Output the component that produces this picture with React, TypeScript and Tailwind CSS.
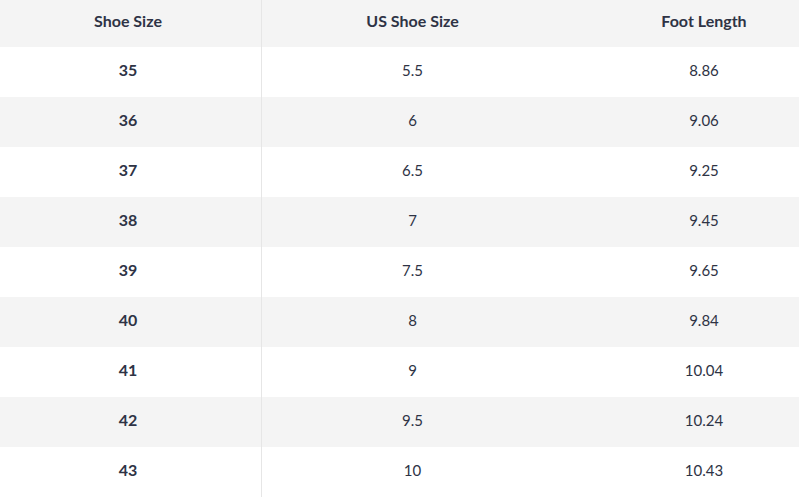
import React from "react";

const rows = [
  ["35", "5.5", "8.86"],
  ["36", "6", "9.06"],
  ["37", "6.5", "9.25"],
  ["38", "7", "9.45"],
  ["39", "7.5", "9.65"],
  ["40", "8", "9.84"],
  ["41", "9", "10.04"],
  ["42", "9.5", "10.24"],
  ["43", "10", "10.43"],
];

export default function App() {
  return (
    <div className="w-[799px] h-[497px] overflow-hidden bg-white font-['Lato','Noto_Sans',sans-serif] text-[#2e3345] text-[15px]">
      <div className="w-[845px]">
        {/* header */}
        <div className="grid grid-cols-[262px_301px_282px] h-[47px] bg-[#f4f4f4] font-bold text-[16px]">
          <div className="flex items-center justify-center pr-[5px] border-r border-[#e6e6e6] pb-[6px]">Shoe Size</div>
          <div className="flex items-center justify-center pb-[6px]">US Shoe Size</div>
          <div className="flex items-center justify-center pb-[6px]">Foot Length</div>
        </div>

        {rows.map((r, i) => (
          <div
            key={r[0]}
            className={`grid grid-cols-[262px_301px_282px] h-[50px] ${i % 2 === 1 ? "bg-[#f4f4f4]" : "bg-white"}`}
          >
            <div className="flex items-center justify-center pr-[5px] border-r border-[#e6e6e6] font-bold text-[16px] pb-[4px]">{r[0]}</div>
            <div className="flex items-center justify-center pb-[4px]">{r[1]}</div>
            <div className="flex items-center justify-center pb-[4px]">{r[2]}</div>
          </div>
        ))}
      </div>
    </div>
  );
}
